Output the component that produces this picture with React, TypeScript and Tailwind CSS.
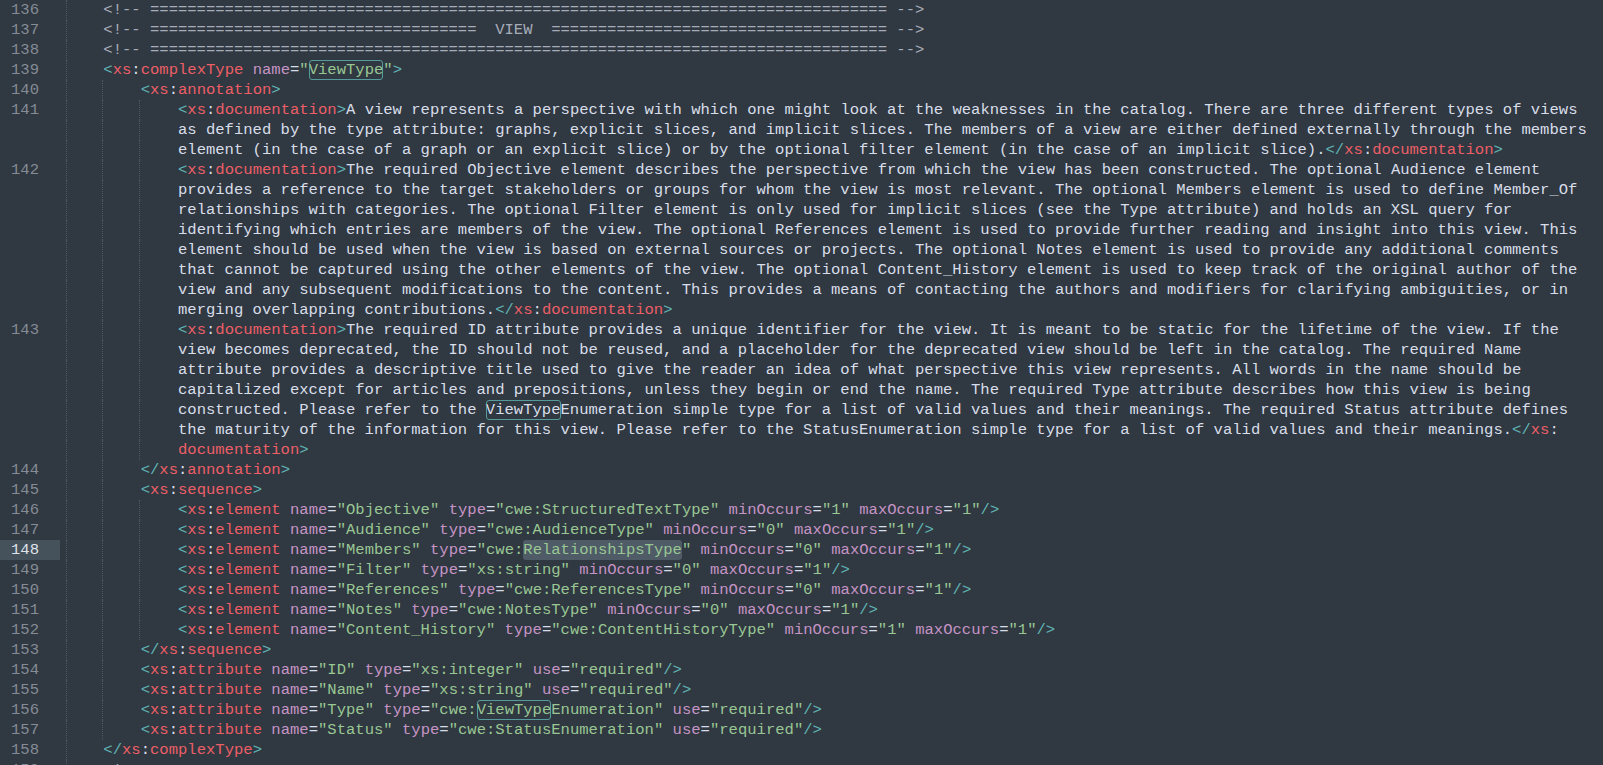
type Seg = [string, string];
type Row = { n?: number; lvl: number; segs: Seg[]; active?: boolean };

const T = 'text-[#5fb3b3]';
const R = 'text-[#ec5f67]';
const P = 'text-[#c594c5]';
const G = 'text-[#99c794]';
const W = 'text-[#d8dee9]';
const K = 'text-[#a6acb9]';
const BOX = 'text-[#99c794] inline-block h-5 align-top rounded-[3px] outline outline-1 -outline-offset-1 outline-[#5fb3b3]/80';
const BOXW = 'text-[#d8dee9] inline-block h-5 align-top rounded-[3px] outline outline-1 -outline-offset-1 outline-[#5fb3b3]/80';
const SEL = 'text-[#99c794] inline-block h-5 align-top rounded-[3px] bg-[#4f5b66]';

const guides = ['left-0', 'left-[36px]', 'left-[73px]'];

const sp = (n: number): Seg => [W, ' '.repeat(n)];
const open = (name: string): Seg[] => [[T, '<'], [R, 'xs'], [W, ':'], [R, name]];
const close = (name: string): Seg[] => [[T, '</'], [R, 'xs'], [W, ':'], [R, name], [T, '>']];
const attr = (k: string, v: string): Seg[] => [[W, ' '], [P, k], [W, '='], [G, `"${v}"`]];
const el = (tag: string, attrs: [string, string][]): Seg[] => [
  ...open(tag),
  ...attrs.flatMap(([k, v]) => attr(k, v)),
  [T, '/>'],
];
const doc = (text: string): Seg[] => [sp(12), [T, '<'], [R, 'xs'], [W, ':'], [R, 'documentation'], [T, '>'], [W, text]];
const wrap = (text: string): Seg[] => [sp(12), [W, text]];

const rule = '    <!-- ' + '='.repeat(79) + ' -->';

const rows: Row[] = [
  { n: 136, lvl: 1, segs: [[K, rule]] },
  { n: 137, lvl: 1, segs: [[K, '    <!-- ' + '='.repeat(35) + '  VIEW  ' + '='.repeat(36) + ' -->']] },
  { n: 138, lvl: 1, segs: [[K, rule]] },
  {
    n: 139,
    lvl: 1,
    segs: [sp(4), ...open('complexType'), [W, ' '], [P, 'name'], [W, '='], [G, '"'], [BOX, 'ViewType'], [G, '"'], [T, '>']],
  },
  { n: 140, lvl: 2, segs: [sp(8), [T, '<'], [R, 'xs'], [W, ':'], [R, 'annotation'], [T, '>']] },
  {
    n: 141,
    lvl: 3,
    segs: doc(
      'A view represents a perspective with which one might look at the weaknesses in the catalog. There are three different types of views'
    ),
  },
  {
    lvl: 3,
    segs: wrap(
      'as defined by the type attribute: graphs, explicit slices, and implicit slices. The members of a view are either defined externally through the members'
    ),
  },
  {
    lvl: 3,
    segs: [
      ...wrap('element (in the case of a graph or an explicit slice) or by the optional filter element (in the case of an implicit slice).'),
      ...close('documentation'),
    ],
  },
  {
    n: 142,
    lvl: 3,
    segs: doc('The required Objective element describes the perspective from which the view has been constructed. The optional Audience element'),
  },
  {
    lvl: 3,
    segs: wrap(
      'provides a reference to the target stakeholders or groups for whom the view is most relevant. The optional Members element is used to define Member_Of'
    ),
  },
  {
    lvl: 3,
    segs: wrap(
      'relationships with categories. The optional Filter element is only used for implicit slices (see the Type attribute) and holds an XSL query for'
    ),
  },
  {
    lvl: 3,
    segs: wrap(
      'identifying which entries are members of the view. The optional References element is used to provide further reading and insight into this view. This'
    ),
  },
  {
    lvl: 3,
    segs: wrap(
      'element should be used when the view is based on external sources or projects. The optional Notes element is used to provide any additional comments'
    ),
  },
  {
    lvl: 3,
    segs: wrap(
      'that cannot be captured using the other elements of the view. The optional Content_History element is used to keep track of the original author of the'
    ),
  },
  {
    lvl: 3,
    segs: wrap(
      'view and any subsequent modifications to the content. This provides a means of contacting the authors and modifiers for clarifying ambiguities, or in'
    ),
  },
  { lvl: 3, segs: [...wrap('merging overlapping contributions.'), ...close('documentation')] },
  {
    n: 143,
    lvl: 3,
    segs: doc(
      'The required ID attribute provides a unique identifier for the view. It is meant to be static for the lifetime of the view. If the'
    ),
  },
  {
    lvl: 3,
    segs: wrap(
      'view becomes deprecated, the ID should not be reused, and a placeholder for the deprecated view should be left in the catalog. The required Name'
    ),
  },
  {
    lvl: 3,
    segs: wrap(
      'attribute provides a descriptive title used to give the reader an idea of what perspective this view represents. All words in the name should be'
    ),
  },
  {
    lvl: 3,
    segs: wrap(
      'capitalized except for articles and prepositions, unless they begin or end the name. The required Type attribute describes how this view is being'
    ),
  },
  {
    lvl: 3,
    segs: [
      sp(12),
      [W, 'constructed. Please refer to the '],
      [BOXW, 'ViewType'],
      [W, 'Enumeration simple type for a list of valid values and their meanings. The required Status attribute defines'],
    ],
  },
  {
    lvl: 3,
    segs: [
      ...wrap(
        'the maturity of the information for this view. Please refer to the StatusEnumeration simple type for a list of valid values and their meanings.'
      ),
      [T, '</'],
      [R, 'xs'],
      [W, ':'],
    ],
  },
  { lvl: 3, segs: [sp(12), [R, 'documentation'], [T, '>']] },
  { n: 144, lvl: 2, segs: [sp(8), ...close('annotation')] },
  { n: 145, lvl: 2, segs: [sp(8), [T, '<'], [R, 'xs'], [W, ':'], [R, 'sequence'], [T, '>']] },
  {
    n: 146,
    lvl: 3,
    segs: [
      sp(12),
      ...el('element', [
        ['name', 'Objective'],
        ['type', 'cwe:StructuredTextType'],
        ['minOccurs', '1'],
        ['maxOccurs', '1'],
      ]),
    ],
  },
  {
    n: 147,
    lvl: 3,
    segs: [
      sp(12),
      ...el('element', [
        ['name', 'Audience'],
        ['type', 'cwe:AudienceType'],
        ['minOccurs', '0'],
        ['maxOccurs', '1'],
      ]),
    ],
  },
  {
    n: 148,
    lvl: 3,
    active: true,
    segs: [
      sp(12),
      ...open('element'),
      ...attr('name', 'Members'),
      [W, ' '],
      [P, 'type'],
      [W, '='],
      [G, '"cwe:'],
      [SEL, 'RelationshipsType'],
      [G, '"'],
      ...attr('minOccurs', '0'),
      ...attr('maxOccurs', '1'),
      [T, '/>'],
    ],
  },
  {
    n: 149,
    lvl: 3,
    segs: [
      sp(12),
      ...el('element', [
        ['name', 'Filter'],
        ['type', 'xs:string'],
        ['minOccurs', '0'],
        ['maxOccurs', '1'],
      ]),
    ],
  },
  {
    n: 150,
    lvl: 3,
    segs: [
      sp(12),
      ...el('element', [
        ['name', 'References'],
        ['type', 'cwe:ReferencesType'],
        ['minOccurs', '0'],
        ['maxOccurs', '1'],
      ]),
    ],
  },
  {
    n: 151,
    lvl: 3,
    segs: [
      sp(12),
      ...el('element', [
        ['name', 'Notes'],
        ['type', 'cwe:NotesType'],
        ['minOccurs', '0'],
        ['maxOccurs', '1'],
      ]),
    ],
  },
  {
    n: 152,
    lvl: 3,
    segs: [
      sp(12),
      ...el('element', [
        ['name', 'Content_History'],
        ['type', 'cwe:ContentHistoryType'],
        ['minOccurs', '1'],
        ['maxOccurs', '1'],
      ]),
    ],
  },
  { n: 153, lvl: 2, segs: [sp(8), ...close('sequence')] },
  {
    n: 154,
    lvl: 2,
    segs: [sp(8), ...el('attribute', [['name', 'ID'], ['type', 'xs:integer'], ['use', 'required']])],
  },
  {
    n: 155,
    lvl: 2,
    segs: [sp(8), ...el('attribute', [['name', 'Name'], ['type', 'xs:string'], ['use', 'required']])],
  },
  {
    n: 156,
    lvl: 2,
    segs: [
      sp(8),
      ...open('attribute'),
      ...attr('name', 'Type'),
      [W, ' '],
      [P, 'type'],
      [W, '='],
      [G, '"cwe:'],
      [BOX, 'ViewType'],
      [G, 'Enumeration"'],
      ...attr('use', 'required'),
      [T, '/>'],
    ],
  },
  {
    n: 157,
    lvl: 2,
    segs: [sp(8), ...el('attribute', [['name', 'Status'], ['type', 'cwe:StatusEnumeration'], ['use', 'required']])],
  },
  { n: 158, lvl: 1, segs: [sp(4), ...close('complexType')] },
  { n: 159, lvl: 1, segs: [[K, rule]] },
];

function Line({ row }: { row: Row }) {
  return (
    <div className="flex h-5">
      <div className="w-[66px] shrink-0">
        <div
          className={`h-5 w-[60px] pr-[21px] text-right ${
            row.active ? 'bg-[#45515b] text-[#dfe3ea]' : 'text-[#858c96]'
          }`}
        >
          {row.n ?? ''}
        </div>
      </div>
      <div className="relative flex-1 whitespace-pre">
        {guides.slice(0, row.lvl).map((g) => (
          <span key={g} className={`absolute top-0 h-5 border-l border-dotted border-[#4d5661] ${g}`} />
        ))}
        {row.segs.map(([cls, text], i) => (
          <span key={i} className={`relative ${cls}`}>
            {text}
          </span>
        ))}
      </div>
    </div>
  );
}

export default function App() {
  return (
    <div className="h-screen w-full overflow-hidden bg-[#303841] font-['Liberation_Mono',monospace] text-[15.55px] leading-5">
      {rows.map((row, i) => (
        <Line key={i} row={row} />
      ))}
    </div>
  );
}
